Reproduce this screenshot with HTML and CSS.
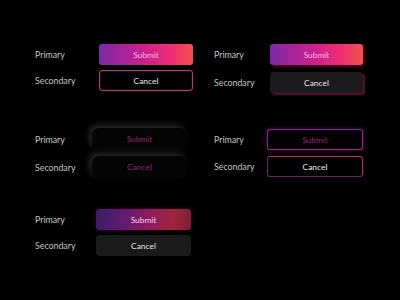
FILE: index.html
```html
<!DOCTYPE html>
<html lang="en">
<head>
  <meta charset="UTF-8">
  <meta name="viewport" content="width=device-width, initial-scale=1.0">
  <title>Button styles</title>
  <link rel="stylesheet" href="styles.css">
</head>
<body>
  <main class="board">
    <!-- Flat gradient -->
    <section class="group group-left">
      <span class="label">Primary</span>
      <button class="btn flat-primary">Submit</button>
      <span class="label">Secondary</span>
      <button class="btn flat-secondary">Cancel</button>
    </section>

    <!-- Offset shadow -->
    <section class="group group-right">
      <span class="label">Primary</span>
      <button class="btn shadow-primary">Submit</button>
      <span class="label">Secondary</span>
      <button class="btn shadow-secondary">Cancel</button>
    </section>

    <!-- Soft / neumorphic -->
    <section class="group group-left group-soft">
      <span class="label">Primary</span>
      <button class="btn soft">Submit</button>
      <span class="label">Secondary</span>
      <button class="btn soft">Cancel</button>
    </section>

    <!-- Outline -->
    <section class="group group-right group-outline">
      <span class="label">Primary</span>
      <button class="btn outline-primary">Submit</button>
      <span class="label">Secondary</span>
      <button class="btn outline-secondary">Cancel</button>
    </section>

    <!-- Blurred gradient -->
    <section class="group group-left group-blur">
      <span class="label">Primary</span>
      <button class="btn blur-primary">Submit</button>
      <span class="label">Secondary</span>
      <button class="btn blur-secondary">Cancel</button>
    </section>
  </main>
</body>
</html>
```

FILE: styles.css
```css
/* Page */
body {
  margin: 0;
  background-color: #000;
  font-family: Lato, "Noto Sans", sans-serif;
}

/* Two columns of button groups */
.board {
  display: grid;
  grid-template-columns: 179px 1fr;
  grid-template-rows: 84px 81px auto;
  padding: 44px 0 0 35px;
}

.group {
  display: grid;
  align-items: center;
  row-gap: 5px;
  grid-auto-rows: 21px;
}

.group-left {
  grid-template-columns: 64px 94px;
}

.group-right {
  grid-template-columns: 56px 93px;
  row-gap: 7px;
}

.group-soft {
  grid-template-columns: 57px 95px;
  row-gap: 6px;
  grid-auto-rows: 22px;
}

.group-outline {
  grid-template-columns: 53px 96px;
  margin-top: 1px;
  row-gap: 6px;
}

.group-blur {
  grid-template-columns: 61px 95px;
}

.label {
  color: #c4c4c4;
  font-size: 8.8px;
}

/* Buttons */
.btn {
  height: 100%;
  width: 100%;
  padding: 0;
  border: 1px solid transparent;
  border-radius: 3px;
  font-family: inherit;
  font-size: 8.4px;
  color: #e8e8e8;
  background: none;
}

.flat-primary,
.shadow-primary {
  background: linear-gradient(90deg, #7b2aa6 0%, #c8208f 45%, #ee2c76 75%, #f2524c 100%) border-box;
  color: #f7b9ee;
}

.flat-secondary {
  background: #000;
  border-color: #c23a78;
  box-shadow: inset 0 0 0 0.5px rgba(150, 40, 120, 0.4);
}

.shadow-primary {
  box-shadow: 2px 2px 3px rgba(150, 20, 60, 0.55);
}

.shadow-secondary {
  background: #1b1b1b;
  box-shadow: 2px 2px 2px rgba(160, 30, 90, 0.6);
}

.soft {
  background: #050505;
  border-radius: 7px;
  color: #8e2868;
  box-shadow: -3px -3px 6px rgba(255, 255, 255, 0.15), 3px 3px 6px rgba(0, 0, 0, 0.9);
}

.outline-primary {
  background: #030005;
  border-color: #7c2c8e;
  border-bottom-color: #a02a7a;
  border-right-color: #a02a7a;
  color: #92266c;
  box-shadow: 0 0 4px rgba(150, 40, 170, 0.55);
}

.outline-secondary {
  background: #000;
  border-color: #b2306e;
  border-left-color: #6a2468;
  border-bottom-color: #6a2468;
  color: #ececec;
}

.blur-primary {
  background: linear-gradient(90deg, #3c1c64 0%, #5a1c72 25%, #8e1a60 55%, #a0243e 80%, #7c2036 100%) border-box;
  color: #f4d4ee;
  box-shadow: 0 0 4px rgba(100, 30, 90, 0.5);
}

.blur-secondary {
  background: #1a1a1a;
  border-radius: 4px;
}
```
